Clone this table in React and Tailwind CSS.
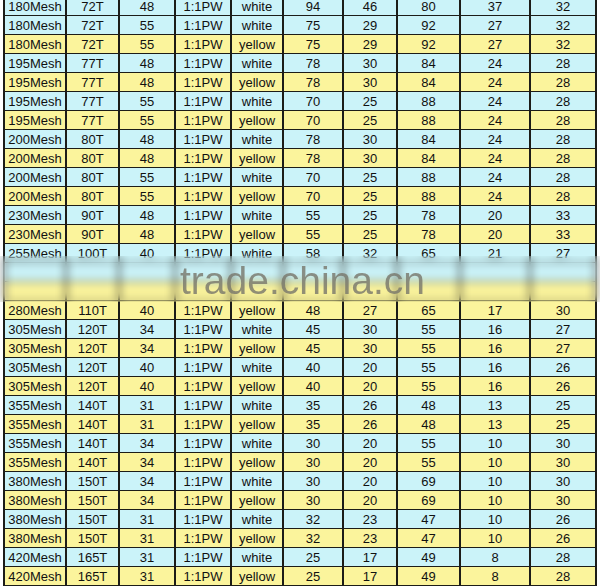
import React from "react";

const B = "blue";
const Y = "yellow";

// [mesh, thread, dia, weave, colour, a, b, c, d, e, bg]
const top = [
  ["180Mesh", "72T", "48", "1:1PW", "white", "94", "46", "80", "37", "32", B],
  ["180Mesh", "72T", "55", "1:1PW", "white", "75", "29", "92", "27", "32", B],
  ["180Mesh", "72T", "55", "1:1PW", "yellow", "75", "29", "92", "27", "32", Y],
  ["195Mesh", "77T", "48", "1:1PW", "white", "78", "30", "84", "24", "28", B],
  ["195Mesh", "77T", "48", "1:1PW", "yellow", "78", "30", "84", "24", "28", Y],
  ["195Mesh", "77T", "55", "1:1PW", "white", "70", "25", "88", "24", "28", B],
  ["195Mesh", "77T", "55", "1:1PW", "yellow", "70", "25", "88", "24", "28", Y],
  ["200Mesh", "80T", "48", "1:1PW", "white", "78", "30", "84", "24", "28", B],
  ["200Mesh", "80T", "48", "1:1PW", "yellow", "78", "30", "84", "24", "28", Y],
  ["200Mesh", "80T", "55", "1:1PW", "white", "70", "25", "88", "24", "28", B],
  ["200Mesh", "80T", "55", "1:1PW", "yellow", "70", "25", "88", "24", "28", Y],
  ["230Mesh", "90T", "48", "1:1PW", "white", "55", "25", "78", "20", "33", B],
  ["230Mesh", "90T", "48", "1:1PW", "yellow", "55", "25", "78", "20", "33", Y],
  ["255Mesh", "100T", "40", "1:1PW", "white", "58", "32", "65", "21", "27", B],
  // rows hidden under the watermark band
  ["", "", "", "", "", "", "", "", "", "", B],
  ["", "", "", "", "", "", "", "", "", "", Y],
];

const bottom = [
  ["280Mesh", "110T", "40", "1:1PW", "yellow", "48", "27", "65", "17", "30", Y],
  ["305Mesh", "120T", "34", "1:1PW", "white", "45", "30", "55", "16", "27", B],
  ["305Mesh", "120T", "34", "1:1PW", "yellow", "45", "30", "55", "16", "27", Y],
  ["305Mesh", "120T", "40", "1:1PW", "white", "40", "20", "55", "16", "26", B],
  ["305Mesh", "120T", "40", "1:1PW", "yellow", "40", "20", "55", "16", "26", Y],
  ["355Mesh", "140T", "31", "1:1PW", "white", "35", "26", "48", "13", "25", B],
  ["355Mesh", "140T", "31", "1:1PW", "yellow", "35", "26", "48", "13", "25", Y],
  ["355Mesh", "140T", "34", "1:1PW", "white", "30", "20", "55", "10", "30", B],
  ["355Mesh", "140T", "34", "1:1PW", "yellow", "30", "20", "55", "10", "30", Y],
  ["380Mesh", "150T", "34", "1:1PW", "white", "30", "20", "69", "10", "30", B],
  ["380Mesh", "150T", "34", "1:1PW", "yellow", "30", "20", "69", "10", "30", Y],
  ["380Mesh", "150T", "31", "1:1PW", "white", "32", "23", "47", "10", "26", B],
  ["380Mesh", "150T", "31", "1:1PW", "yellow", "32", "23", "47", "10", "26", Y],
  ["420Mesh", "165T", "31", "1:1PW", "white", "25", "17", "49", "8", "28", B],
  ["420Mesh", "165T", "31", "1:1PW", "yellow", "25", "17", "49", "8", "28", Y],
];

function Row({ cells }) {
  const bg = cells[10] === Y ? "bg-[#fbf49c]" : "bg-[#cbf3f9]";
  return (
    <div
      className={`grid grid-cols-[62px_53px_56px_56px_52px_60px_54px_63px_70px_66px] h-[19px] border-b border-[#1c1c18] ${bg}`}
    >
      {cells.slice(0, 10).map((c, i) => (
        <div
          key={i}
          className="flex items-center justify-center border-r-2 border-[#1c1c18] leading-none"
        >
          {c}
        </div>
      ))}
    </div>
  );
}

export default function App() {
  return (
    <div
      className="relative w-[600px] h-[587px] overflow-hidden bg-white text-[13px] text-[#111111]"
      style={{ fontFamily: '"Liberation Sans", Arial, sans-serif' }}
    >
      <div className="-mt-[3px] ml-[3px] w-[594px] border-l-2 border-[#1c1c18]">
        {top.map((r, i) => (
          <Row key={"t" + i} cells={r} />
        ))}
        {bottom.map((r, i) => (
          <Row key={"b" + i} cells={r} />
        ))}
      </div>

      {/* watermark band */}
      <div className="absolute left-0 right-0 top-[256px] h-[46px] backdrop-blur-[4px]" />
      <div className="absolute left-[180px] top-[261px] text-[39px] leading-[40px] text-[#77766a]/80 whitespace-nowrap">
        trade.china.cn
      </div>
    </div>
  );
}
